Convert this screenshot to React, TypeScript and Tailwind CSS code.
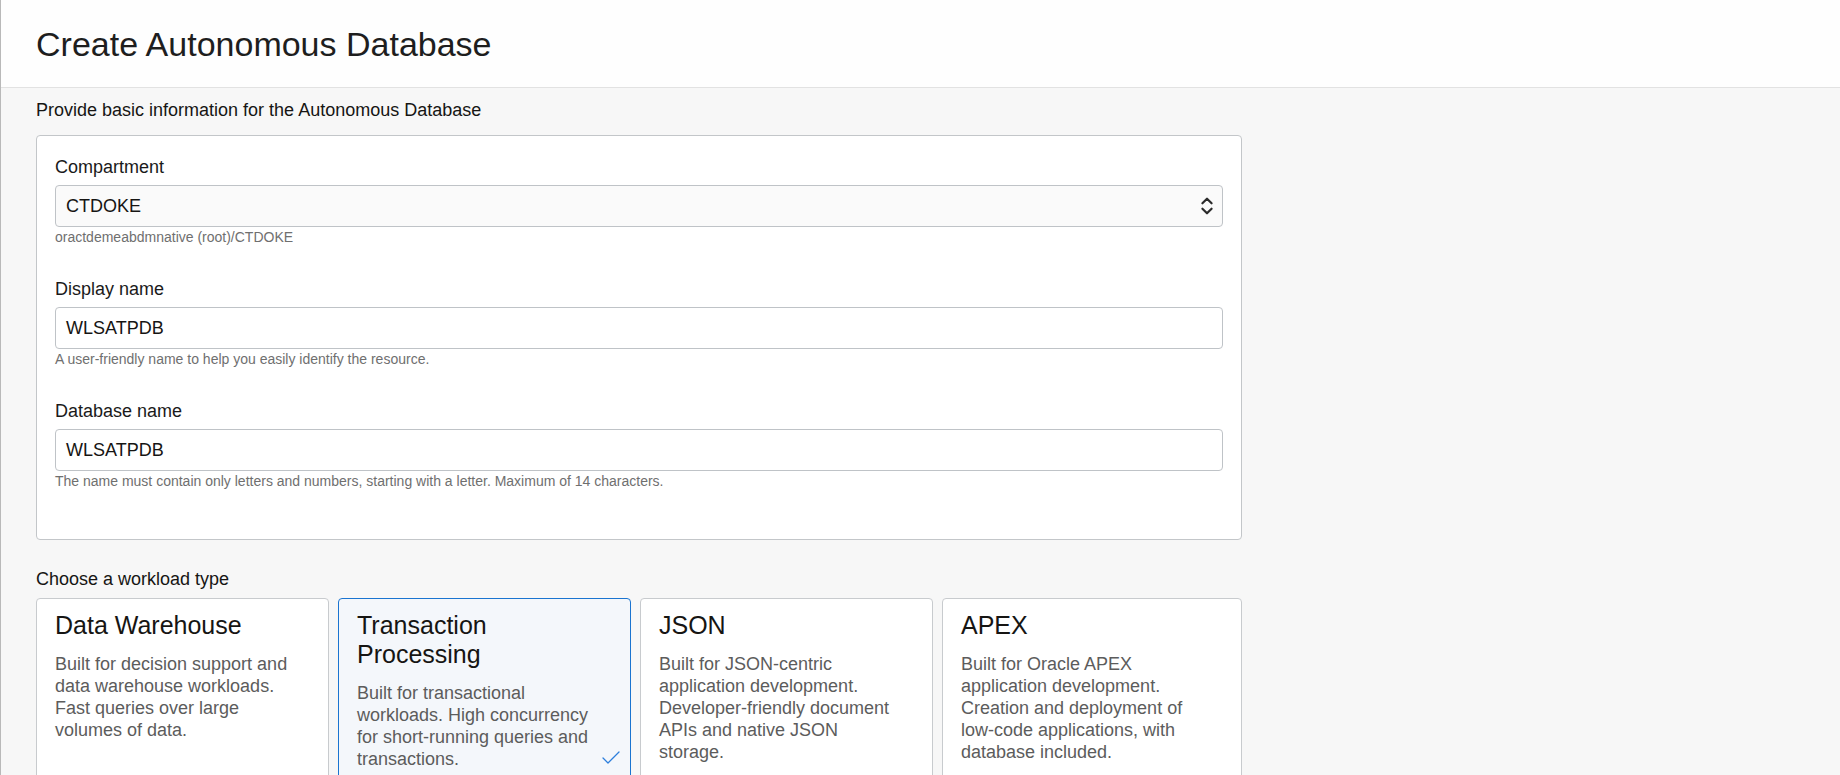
import { ChevronsUpDown, Check } from "lucide-react";

type Workload = {
  key: string;
  title: string[];
  description: string[];
  selected?: boolean;
};

const workloads: Workload[] = [
  {
    key: "dw",
    title: ["Data Warehouse"],
    description: [
      "Built for decision support and",
      "data warehouse workloads.",
      "Fast queries over large",
      "volumes of data.",
    ],
  },
  {
    key: "tp",
    title: ["Transaction", "Processing"],
    description: [
      "Built for transactional",
      "workloads. High concurrency",
      "for short-running queries and",
      "transactions.",
    ],
    selected: true,
  },
  {
    key: "json",
    title: ["JSON"],
    description: [
      "Built for JSON-centric",
      "application development.",
      "Developer-friendly document",
      "APIs and native JSON",
      "storage.",
    ],
  },
  {
    key: "apex",
    title: ["APEX"],
    description: [
      "Built for Oracle APEX",
      "application development.",
      "Creation and deployment of",
      "low-code applications, with",
      "database included.",
    ],
  },
];

function Field({
  label,
  value,
  help,
  select,
  className,
}: {
  label: string;
  value: string;
  help: string;
  select?: boolean;
  className?: string;
}) {
  return (
    <div className={className}>
      <label className="block text-[18px] leading-[22px] text-[#1a1a1a]">{label}</label>
      <div
        className={`mt-[7px] flex h-[42px] items-center justify-between rounded-[4px] border border-[#bfc3c7] pl-[10px] pr-[4px] text-[18px] text-[#161513] ${
          select ? "bg-[#fafafa]" : "bg-white"
        }`}
      >
        <span>{value}</span>
        {select && <ChevronsUpDown size={22} strokeWidth={2.4} className="text-[#2b2b2b]" />}
      </div>
      <p className="mt-[2px] text-[14px] leading-[17px] text-[#6f6f6f]">{help}</p>
    </div>
  );
}

function WorkloadCard({ w }: { w: Workload }) {
  return (
    <div
      className={`relative h-[190px] rounded-[4px] border px-[18px] pt-[12px] ${
        w.selected ? "border-[#1b74d0] bg-[#f4f7fb]" : "border-[#c8cbce] bg-white"
      }`}
    >
      <h3 className="text-[25px] leading-[29px] text-[#161513]">
        {w.title.map((t) => (
          <span key={t} className="block">
            {t}
          </span>
        ))}
      </h3>
      <p className="mt-[13px] text-[18px] leading-[22px] text-[#5c5c5c]">
        {w.description.map((d) => (
          <span key={d} className="block">
            {d}
          </span>
        ))}
      </p>
      {w.selected && (
        <Check
          size={24}
          strokeWidth={1.3}
          className="absolute right-[7px] top-[147px] text-[#2d7fdc]"
        />
      )}
    </div>
  );
}

export default function App() {
  return (
    <div
      className="min-h-screen overflow-hidden border-l border-[#b9b9b9] bg-[#f7f7f7]"
      style={{ fontFamily: '"Liberation Sans", Arial, sans-serif' }}
    >
      <header className="flex h-[88px] items-center border-b border-[#e2e2e2] bg-[#fefefe] px-[35px]">
        <h1 className="text-[34px] leading-none text-[#1e1e1e]">Create Autonomous Database</h1>
      </header>

      <main className="w-[1241px] pl-[35px] pt-[11px]">
        <p className="text-[18px] leading-[22px] text-[#161513]">
          Provide basic information for the Autonomous Database
        </p>

        <section className="mt-[14px] rounded-[4px] border border-[#c3c6c9] bg-white px-[18px] pb-[49px] pt-[20px]">
          <Field
            label="Compartment"
            value="CTDOKE"
            help="oractdemeabdmnative (root)/CTDOKE"
            select
          />
          <Field
            className="mt-[32px]"
            label="Display name"
            value="WLSATPDB"
            help="A user-friendly name to help you easily identify the resource."
          />
          <Field
            className="mt-[32px]"
            label="Database name"
            value="WLSATPDB"
            help="The name must contain only letters and numbers, starting with a letter. Maximum of 14 characters."
          />
        </section>

        <p className="mt-[28px] text-[18px] leading-[22px] text-[#161513]">Choose a workload type</p>

        <div className="mt-[8px] grid grid-cols-[293px_293px_293px_1fr] gap-[9px]">
          {workloads.map((w) => (
            <WorkloadCard key={w.key} w={w} />
          ))}
        </div>
      </main>
    </div>
  );
}
